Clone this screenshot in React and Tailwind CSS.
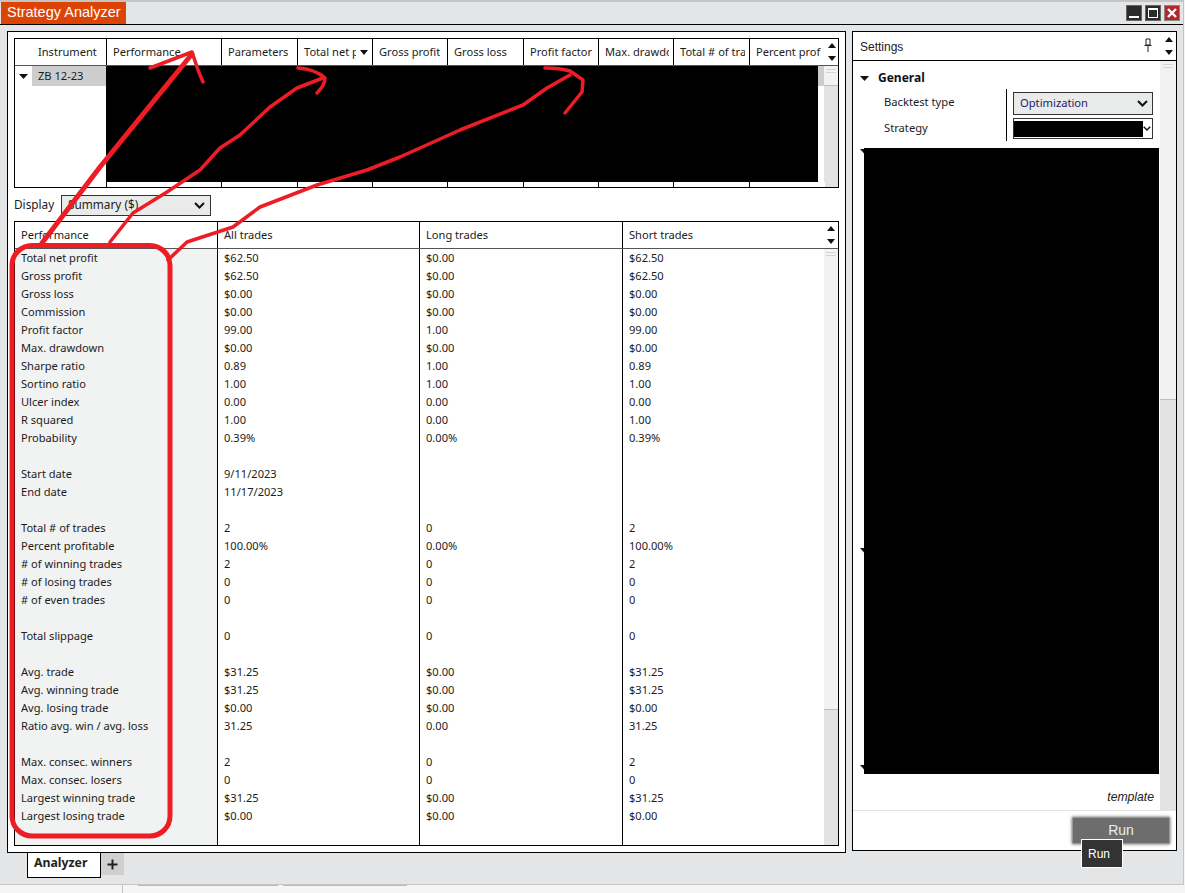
import React from 'react';

const segoe = { fontFamily: '"Noto Sans", "Open Sans", sans-serif' };
const arial = { fontFamily: '"Liberation Sans", Arial, sans-serif' };

const topColumns = [
  { label: 'Performance', width: 'w-[115px]' },
  { label: 'Parameters', width: 'w-[76px]' },
  { label: 'Total net profit', width: 'w-[75px]', sorted: true },
  { label: 'Gross profit', width: 'w-[75px]' },
  { label: 'Gross loss', width: 'w-[76px]' },
  { label: 'Profit factor', width: 'w-[75px]' },
  { label: 'Max. drawdown', width: 'w-[75px]' },
  { label: 'Total # of trades', width: 'w-[76px]' },
  { label: 'Percent profitable', width: 'w-[75px]', last: true },
];

const rows = [
  ['Total net profit', '$62.50', '$0.00', '$62.50'],
  ['Gross profit', '$62.50', '$0.00', '$62.50'],
  ['Gross loss', '$0.00', '$0.00', '$0.00'],
  ['Commission', '$0.00', '$0.00', '$0.00'],
  ['Profit factor', '99.00', '1.00', '99.00'],
  ['Max. drawdown', '$0.00', '$0.00', '$0.00'],
  ['Sharpe ratio', '0.89', '1.00', '0.89'],
  ['Sortino ratio', '1.00', '1.00', '1.00'],
  ['Ulcer index', '0.00', '0.00', '0.00'],
  ['R squared', '1.00', '0.00', '1.00'],
  ['Probability', '0.39%', '0.00%', '0.39%'],
  ['', '', '', ''],
  ['Start date', '9/11/2023', '', ''],
  ['End date', '11/17/2023', '', ''],
  ['', '', '', ''],
  ['Total # of trades', '2', '0', '2'],
  ['Percent profitable', '100.00%', '0.00%', '100.00%'],
  ['# of winning trades', '2', '0', '2'],
  ['# of losing trades', '0', '0', '0'],
  ['# of even trades', '0', '0', '0'],
  ['', '', '', ''],
  ['Total slippage', '0', '0', '0'],
  ['', '', '', ''],
  ['Avg. trade', '$31.25', '$0.00', '$31.25'],
  ['Avg. winning trade', '$31.25', '$0.00', '$31.25'],
  ['Avg. losing trade', '$0.00', '$0.00', '$0.00'],
  ['Ratio avg. win / avg. loss', '31.25', '0.00', '31.25'],
  ['', '', '', ''],
  ['Max. consec. winners', '2', '0', '2'],
  ['Max. consec. losers', '0', '0', '0'],
  ['Largest winning trade', '$31.25', '$0.00', '$31.25'],
  ['Largest losing trade', '$0.00', '$0.00', '$0.00'],
];

function Triangle({ up, size = 9, className = '' }) {
  return (
    <svg width={size} height="5" viewBox="0 0 10 6" preserveAspectRatio="none" className={`shrink-0 ${className}`}>
      <path d={up ? 'M0 6 L5 0 L10 6 Z' : 'M0 0 L10 0 L5 6 Z'} fill="#111" />
    </svg>
  );
}

function UpDown({ className = '' }) {
  return (
    <div className={`flex flex-col items-center justify-center gap-[8px] ${className}`}>
      <Triangle up size={8} />
      <Triangle size={8} />
    </div>
  );
}

function Chevron({ className = '' }) {
  return (
    <svg width="11" height="7" viewBox="0 0 11 7" className={className}>
      <path d="M1 1 L5.5 5.5 L10 1" fill="none" stroke="#111" strokeWidth="2" />
    </svg>
  );
}

function ScrollGrip() {
  return (
    <div className="flex flex-col items-center gap-[2px] pt-[3px]">
      <div className="h-px w-[10px] bg-[#d4d4d4]" />
      <div className="h-px w-[10px] bg-[#d4d4d4]" />
    </div>
  );
}

function Scrollbar({ thumb }) {
  return (
    <div className="w-[14px] shrink-0 bg-[#e3e3e3]">
      <div className={`${thumb} bg-[#f2f2f2] border-b border-[#bdbdbd]`}>
        <ScrollGrip />
      </div>
    </div>
  );
}

function TopGrid() {
  return (
    <div className="h-[150px] border border-black flex flex-col text-[11.1px] text-[#1c1c1c]" style={segoe}>
      <div className="h-[27px] flex border-b border-[#555] shrink-0">
        <div className="w-[92px] pl-[23px] border-r border-black flex items-center shrink-0">Instrument</div>
        {topColumns.map((c) => (
          <div key={c.label} className={`${c.width} relative shrink-0 ${c.last ? '' : 'border-r border-black'} flex items-center pl-[6px] pr-[4px] whitespace-nowrap`}>
            <span className={c.sorted ? 'block w-[52px] overflow-hidden' : 'block overflow-hidden'}>{c.label}</span>
            {c.sorted && <Triangle size={8} className="absolute right-[4px] top-[11px]" />}
          </div>
        ))}
        <UpDown className="flex-1" />
      </div>
      <div className="flex-1 flex min-h-0">
        <div className="w-[92px] shrink-0 border-r border-black flex">
          <div className="w-[17px] flex justify-end pt-[8px] pr-[4px]"><Triangle /></div>
          <div className="h-[20px] flex-1 bg-[#cdcdcd] pl-[6px] flex items-center">ZB 12-23</div>
        </div>
        <div className="flex-1 flex flex-col min-w-0">
          <div className="h-[116px] flex shrink-0">
            <div className="flex-1 bg-black" />
            <div className="w-[6px] h-[20px] bg-[#cdcdcd]" />
            <Scrollbar thumb="h-[20px]" />
          </div>
          <div className="flex-1 flex">
            {topColumns.map((c) => (
              <div key={c.label} className={`${c.width} shrink-0 ${c.last ? '' : 'border-r border-black'}`} />
            ))}
            <div className="w-[1px] flex-1 bg-[#e3e3e3]" />
          </div>
        </div>
      </div>
    </div>
  );
}

function DisplayRow() {
  return (
    <div className="h-[33px] flex items-center shrink-0 text-[11.8px] text-[#1c1c1c]" style={segoe}>
      <span className="w-[47px]">Display</span>
      <div className="w-[150px] h-[21px] mt-[1px] bg-[#e9ebea] border border-[#333] flex items-center justify-between pl-[6px] pr-[5px]">
        <span>Summary ($)</span>
        <Chevron />
      </div>
    </div>
  );
}

function SummaryGrid() {
  return (
    <div className="flex-1 min-h-0 border border-black flex flex-col text-[11.1px] text-[#1c1c1c]" style={segoe}>
      <div className="h-[27px] flex border-b border-[#555] shrink-0">
        <div className="w-[203px] pl-[6px] border-r border-black flex items-center shrink-0">Performance</div>
        <div className="w-[202px] pl-[6px] border-r border-black flex items-center shrink-0">All trades</div>
        <div className="w-[203px] pl-[6px] border-r border-black flex items-center shrink-0">Long trades</div>
        <div className="flex-1 pl-[6px] flex items-center">Short trades</div>
        <UpDown className="w-[14px] shrink-0" />
      </div>
      <div className="flex-1 flex min-h-0">
        <div className="w-[203px] shrink-0 bg-[#f1f2f2] border-r border-black pl-[6px]">
          {rows.map((r, i) => (
            <div key={i} className="h-[18px] leading-[18px] whitespace-nowrap">{r[0]}</div>
          ))}
        </div>
        <div className="w-[202px] shrink-0 border-r border-black pl-[6px]">
          {rows.map((r, i) => (
            <div key={i} className="h-[18px] leading-[18px]">{r[1]}</div>
          ))}
        </div>
        <div className="w-[203px] shrink-0 border-r border-black pl-[6px]">
          {rows.map((r, i) => (
            <div key={i} className="h-[18px] leading-[18px]">{r[2]}</div>
          ))}
        </div>
        <div className="flex-1 pl-[6px]">
          {rows.map((r, i) => (
            <div key={i} className="h-[18px] leading-[18px]">{r[3]}</div>
          ))}
        </div>
        <Scrollbar thumb="h-[461px]" />
      </div>
    </div>
  );
}

function SettingsPanel() {
  return (
    <div className="w-[325px] h-[820px] border border-black bg-white flex flex-col relative" style={arial}>
      <div className="h-[29px] shrink-0 border-b border-black flex items-center pl-[7px] text-[12px] text-[#222]">
        <span className="flex-1 pt-[1px]">Settings</span>
        <svg width="8" height="14" viewBox="0 0 8 14" className="mr-[9px] mb-[2px]">
          <path d="M2 1 H6 V7 H2 Z M0.5 7.5 H7.5 M4 8 V14" fill="none" stroke="#222" strokeWidth="1" />
        </svg>
        <UpDown className="w-[15px] shrink-0" />
      </div>
      <div className="flex-1 flex min-h-0">
        <div className="flex-1 min-w-0 flex flex-col">
          <div className="h-[713px] shrink-0 flex flex-col pl-[7px] pt-[1px]">
            <div className="flex items-center h-[32px] shrink-0 text-[12px] font-bold text-[#111]" style={segoe}>
              <Triangle />
              <span className="ml-[9px]">General</span>
            </div>
            <div className="flex h-[52px] -mt-[5px] shrink-0 text-[11.2px] text-[#1c1c1c]" style={segoe}>
              <div className="w-[147px] border-r border-black pl-[24px] pt-[5px]">
                <div className="h-[26px]">Backtest type</div>
                <div>Strategy</div>
              </div>
              <div className="pl-[6px] pt-[3px] flex flex-col gap-[3px]">
                <div className="w-[140px] h-[23px] bg-[#e9ebea] border border-[#333] flex items-center justify-between pl-[6px] pr-[4px] text-[#1b1b6b]">
                  <span>Optimization</span>
                  <Chevron />
                </div>
                <div className="w-[140px] h-[21px] border border-[#333] flex items-center justify-between">
                  <div className="w-[130px] h-[16px] bg-black" />
                  <Chevron className="w-[8px] mr-[1px]" />
                </div>
              </div>
            </div>
            <div className="flex mt-[7px] flex-1">
              <div className="w-[4px] h-[626px] overflow-hidden flex flex-col">
                <Triangle className="mt-[1px]" />
                <Triangle className="mt-[394px]" />
                <Triangle className="mt-[212px]" />
              </div>
              <div className="w-[295px] h-[626px] bg-black" />
            </div>
          </div>
          <div className="flex-1 flex items-start justify-end pr-[6px] pt-[14px] text-[12.2px] italic text-[#222]">template</div>
        </div>
        <div className="w-[16px] shrink-0 bg-[#e3e3e3]">
          <div className="h-[339px] bg-[#f2f2f2] border-b border-[#bdbdbd]"><ScrollGrip /></div>
        </div>
      </div>
      <div className="h-[40px] shrink-0 border-t border-[#e2e2e2] flex justify-end pt-[6px] pr-[6px]">
        <div className="w-[98px] h-[27px] bg-[#6d6d6d] border border-[#9a9a9a] shadow-[0_0_3px_#555] flex items-center justify-center text-[14px] text-[#eee]">Run</div>
      </div>
      <div className="absolute left-[228px] bottom-[-18px] w-[42px] h-[29px] bg-[#333] border border-white text-white text-[12px] flex items-center pl-[6px]">Run</div>
    </div>
  );
}

function Annotations() {
  return (
    <svg className="absolute left-0 top-0 pointer-events-none" width="1185" height="893" viewBox="0 0 1185 893">
      <g fill="none" stroke="#ee1c25" strokeLinecap="round" strokeLinejoin="round">
        <rect x="12" y="245.5" width="158" height="590.5" rx="20" strokeWidth="5" />
        <path strokeWidth="5" d="M42 243 L100 167 L192 54" />
        <path strokeWidth="3.5" d="M150 68 L192 52 L198 70 L203 82" />
        <path strokeWidth="3.5" d="M110 242 L133 213 L167 192 L200 170 L220 148 L240 135 L270 107 L297 88 L323 78" />
        <path strokeWidth="3.5" d="M298 68 Q315 69 325 78 Q325 85 317 93" />
        <path strokeWidth="3.5" d="M168 260 L187 242 L233 227 L260 207 L317 185 L367 170 L400 157 L460 130 L523 105 L547 88 L570 75" />
        <path strokeWidth="3.5" d="M545 68 Q560 68 570 71 L583 80 L582 92 L565 113" />
      </g>
    </svg>
  );
}

export default function App() {
  return (
    <div className="w-[1185px] h-[893px] relative overflow-hidden bg-[#f5f5f5]">
      <div className="h-[885px] w-[1184px] bg-[#e4e5e7] border-t-2 border-r border-b border-[#c4c4c4] flex flex-col">
        <div className="h-[23px] shrink-0 border-b border-black flex items-end justify-between pr-[3px]">
          <div className="ml-[1px] w-[125px] h-[22px] bg-[#dc4405] text-white text-[14.5px] pl-[6px] flex items-center" style={arial}>Strategy Analyzer</div>
          <div className="flex gap-[3px] mb-[3px]">
            <div className="w-[16px] h-[16px] bg-[#2b2b2b] border border-[#666] flex items-end justify-center pb-[2px]"><div className="w-[10px] h-[2px] bg-white" /></div>
            <div className="w-[16px] h-[16px] bg-[#2b2b2b] border border-[#666] flex items-center justify-center"><div className="w-[10px] h-[10px] border border-white border-t-2" /></div>
            <div className="w-[16px] h-[16px] bg-[#b3262b] border border-[#888] flex items-center justify-center">
              <svg width="10" height="10" viewBox="0 0 10 10"><path d="M1 1 L9 9 M9 1 L1 9" stroke="#fff" strokeWidth="2.4" /></svg>
            </div>
          </div>
        </div>
        <div className="flex gap-[6px] pl-[7px] pt-[6px] items-start">
          <div className="w-[839px] h-[822px] bg-white border border-black px-[6px] pt-[6px] pb-[6px] flex flex-col">
            <TopGrid />
            <DisplayRow />
            <SummaryGrid />
          </div>
          <SettingsPanel />
        </div>
        <div className="flex pl-[27px]" style={segoe}>
          <div className="w-[74px] h-[25px] bg-white border-x border-b border-black flex items-center pl-[6px] pb-[3px] text-[12.3px] font-bold text-[#222]">Analyzer</div>
          <div className="w-[23px] h-[22px] bg-[#d0d0d0] flex items-center justify-center">
            <svg width="11" height="11" viewBox="0 0 11 11"><path d="M5.5 0.5 V10.5 M0.5 5.5 H10.5" stroke="#222" strokeWidth="2" /></svg>
          </div>
        </div>
      </div>
      <div className="ml-[122px] h-[8px] border-l border-[#c4c4c4] flex pl-[15px] gap-[5px]">
        <div className="w-[140px] h-px bg-[#bbb]" />
        <div className="w-[124px] h-px bg-[#bbb]" />
      </div>
      <Annotations />
    </div>
  );
}
